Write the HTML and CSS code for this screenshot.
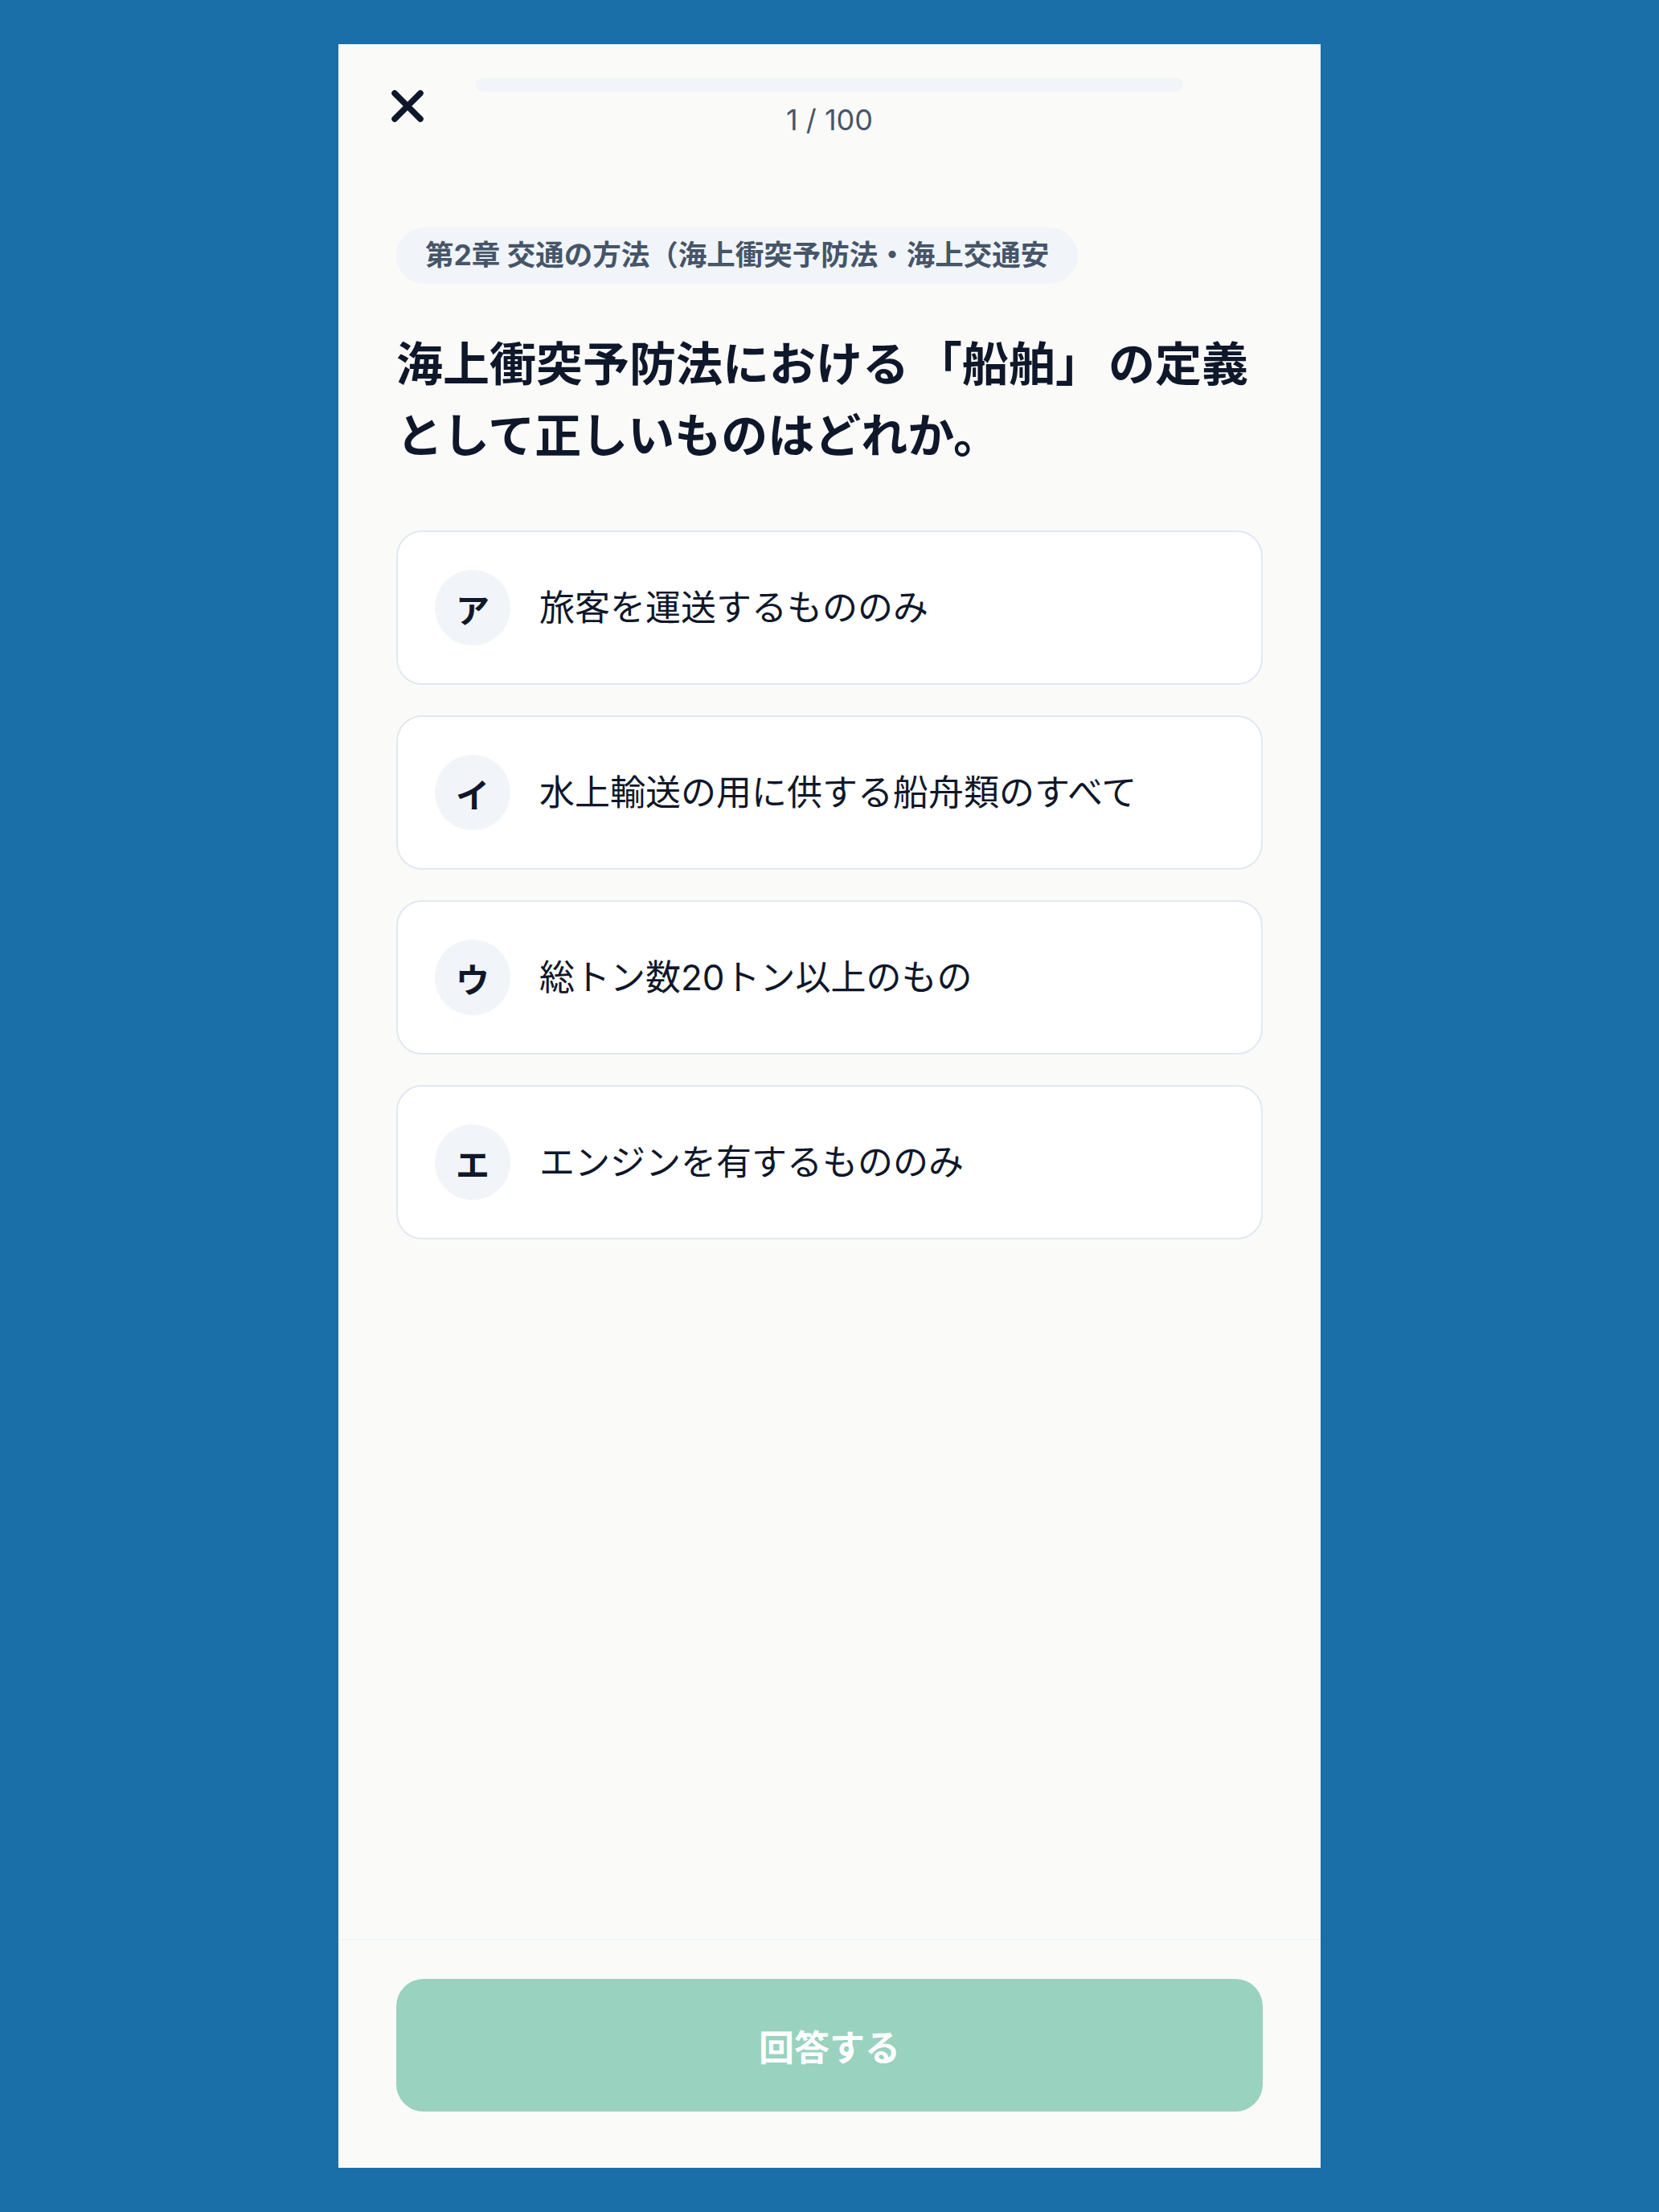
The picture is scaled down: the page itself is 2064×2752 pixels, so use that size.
FILE: index.html
```html
<!DOCTYPE html>
<html lang="ja">
  <head>
    <meta charset="utf-8">
    <title>問題 1 / 100</title>
    <link rel="stylesheet" href="styles.css">
  </head>
  <body>
    <div class="quiz-screen">
      <header class="quiz-header">
        <button class="close-btn" aria-label="閉じる">
          <svg width="44" height="44" viewBox="0 0 44 44" fill="none">
            <path d="M6 6 L38 38 M38 6 L6 38" stroke="#0f172a" stroke-width="7.5" stroke-linecap="round"/>
          </svg>
        </button>
        <div class="progress">
          <div class="progress-track">
            <div class="progress-fill" style="width: 1%"></div>
          </div>
          <div class="progress-count">1 / 100</div>
        </div>
        <div class="header-spacer"></div>
      </header>

      <main class="quiz-body">
        <div class="chapter-chip">第2章 交通の方法（海上衝突予防法・海上交通安</div>
        <h1 class="question">海上衝突予防法における<span class="quote">「船舶」</span>の定義<br>として正しいものはどれか。</h1>

        <div class="options">
          <button class="option">
            <span class="option-mark">ア</span>
            <span class="option-text">旅客を運送するもののみ</span>
          </button>
          <button class="option">
            <span class="option-mark">イ</span>
            <span class="option-text">水上輸送の用に供する船舟類のすべて</span>
          </button>
          <button class="option">
            <span class="option-mark">ウ</span>
            <span class="option-text">総トン数20トン以上のもの</span>
          </button>
          <button class="option">
            <span class="option-mark">エ</span>
            <span class="option-text">エンジンを有するもののみ</span>
          </button>
        </div>
      </main>

      <footer class="quiz-footer">
        <button class="answer-btn" disabled>回答する</button>
      </footer>
    </div>
  </body>
</html>
```

FILE: styles.css
```css
body {
  margin: 0;
  padding: 55px 0;
  background-color: #1b6fa9;
  font-family: "Inter", "Noto Sans CJK JP", sans-serif;
  color: #0f172a;
}

.quiz-screen {
  display: flex;
  flex-direction: column;
  width: 1222px;
  height: 2642px;
  margin: 0 auto;
  background-color: #fafaf9;
}

/* header */

.quiz-header {
  display: grid;
  grid-template-columns: 80px 1fr 80px;
  column-gap: 27px;
  padding: 42px 64px 0;
}

.close-btn {
  width: 44px;
  height: 44px;
  margin-top: 13px;
  padding: 0;
  border: none;
  background: none;
  cursor: pointer;
}

.close-btn svg {
  display: block;
}

.progress {
  display: flex;
  flex-direction: column;
  align-items: center;
}

.progress-track {
  width: 100%;
  height: 17px;
  border-radius: 9px;
  background-color: #f1f5f9;
  overflow: hidden;
}

.progress-fill {
  height: 100%;
  background-color: #f1f5f9;
}

.progress-count {
  margin-top: 10px;
  font-size: 36px;
  line-height: 50px;
  color: #475569;
}

/* question */

.quiz-body {
  flex: 1;
  padding: 109px 72px 0;
}

.chapter-chip {
  display: inline-block;
  height: 70px;
  padding: 0 36px;
  border-radius: 35px;
  background-color: #f1f5f9;
  color: #475569;
  font-size: 35.5px;
  font-weight: 700;
  line-height: 70px;
  white-space: nowrap;
}

.question {
  margin: 52px 0 77px;
  font-family: "Noto Sans CJK JP", sans-serif;
  font-size: 58px;
  font-weight: 700;
  line-height: 89px;
  color: #0f172a;
}

/* a bit of air round the brackets */
.question .quote {
  padding: 0 8px;
}

.options {
  display: flex;
  flex-direction: column;
  gap: 38px;
}

.option {
  display: flex;
  align-items: center;
  gap: 36px;
  width: 100%;
  padding: 47px 46px;
  border: 2px solid #e2e8f0;
  border-radius: 32px;
  background-color: #fff;
  font-family: inherit;
  text-align: left;
  cursor: pointer;
}

.option-mark {
  display: flex;
  align-items: center;
  justify-content: center;
  flex-shrink: 0;
  width: 94px;
  height: 94px;
  border-radius: 50%;
  background-color: #f1f5f9;
  color: #0f172a;
  font-size: 42px;
  font-weight: 700;
}

.option-text {
  font-size: 44px;
  line-height: 1.5;
  color: #0f172a;
}

/* footer */

.quiz-footer {
  padding: 48px 72px 70px;
  border-top: 2px solid #f1f5f9;
}

.answer-btn {
  display: block;
  width: 100%;
  height: 165px;
  border: none;
  border-radius: 34px;
  background-color: #99d2bf;
  color: #fff;
  font-family: inherit;
  font-size: 44px;
  font-weight: 700;
}
```
